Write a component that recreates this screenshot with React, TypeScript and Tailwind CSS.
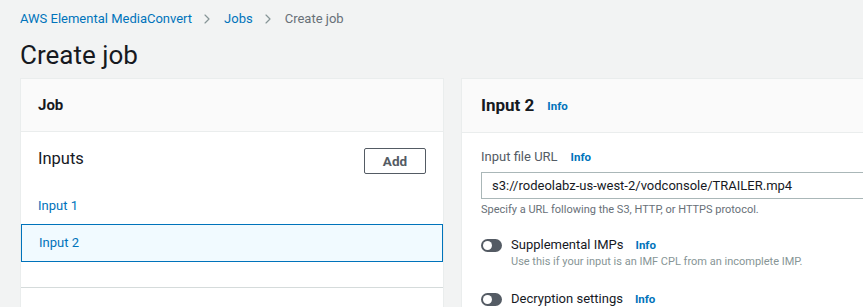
import { ChevronRight } from "lucide-react";

const Info = ({ className = "" }: { className?: string }) => (
  <span className={`text-[11.5px] font-bold text-[#0073bb] ${className}`}>Info</span>
);

const Toggle = () => (
  <span className="flex h-[13px] w-[21px] shrink-0 items-center rounded-full bg-[#545b64] px-[2px]">
    <span className="h-[9px] w-[9px] rounded-full bg-white" />
  </span>
);

const App = () => {
  return (
    <div
      className="h-[307px] w-[863px] overflow-hidden bg-[#f2f3f3] pl-5 text-[#16191f]"
      style={{ fontFamily: 'Roboto, "Open Sans", sans-serif' }}
    >
      <nav className="flex h-[38px] items-center text-[13px]">
        <span className="text-[#0073bb]">AWS Elemental MediaConvert</span>
        <ChevronRight className="ml-[7px] mr-[9px] h-4 w-4 text-[#879596]" strokeWidth={1.75} />
        <span className="text-[#0073bb]">Jobs</span>
        <ChevronRight className="ml-[7px] mr-[9px] h-4 w-4 text-[#879596]" strokeWidth={1.75} />
        <span className="text-[#687078]">Create job</span>
      </nav>
      <h1 className="h-[40px] text-[26px] leading-[34px] font-normal">Create job</h1>

      <div className="flex w-[900px] items-start gap-[17px]">
        {/* left panel */}
        <section className="w-[424px] shrink-0 border border-[#eaeded] bg-white">
          <div className="flex h-[53px] items-center border-b border-[#eaeded] bg-[#fafafa] px-[17px]">
            <h2 className="text-[15px] font-bold">Job</h2>
          </div>
          <div className="pt-[16px]">
            <div className="flex items-start justify-between px-[17px]">
              <span className="text-[16.5px] leading-[22px]">Inputs</span>
              <button className="h-[26px] w-[62px] rounded-[2px] border border-[#545b64] text-[13.5px] font-bold text-[#545b64]">
                Add
              </button>
            </div>
            <div className="mt-[13px] flex h-[37px] items-center px-[17px] text-[13px] text-[#0073bb]">
              Input 1
            </div>
            <div className="flex h-[38px] items-center border border-[#0073bb] bg-[#f1faff] px-[17px] text-[13px] text-[#0073bb]">
              Input 2
            </div>
            <div className="h-[25px]" />
          </div>
          <div className="h-[40px] border-t border-[#d5dbdb]" />
        </section>

        {/* right panel */}
        <section className="w-[440px] shrink-0 border border-[#eaeded] bg-white">
          <div className="flex h-[54px] items-center gap-[13px] border-b border-[#eaeded] bg-[#fafafa] px-[19px]">
            <h2 className="text-[17px] font-bold">Input 2</h2>
            <Info className="mt-[2px]" />
          </div>
          <div className="px-[19px] pt-[14px]">
            <div className="flex items-center gap-[13px] leading-[20px]">
              <span className="text-[13px] text-[#545b64]">Input file URL</span>
              <Info />
            </div>
            <div className="mt-[5px] flex h-[27px] items-center border border-[#aab7b8] pl-[10px] text-[13px]">
              s3://rodeolabz-us-west-2/vodconsole/TRAILER.mp4
            </div>
            <p className="mt-[3px] text-[11px] leading-[16px] text-[#687078]">
              Specify a URL following the S3, HTTP, or HTTPS protocol.
            </p>

            <div className="mt-[18px] flex gap-[9px]">
              <div className="pt-[3px]">
                <Toggle />
              </div>
              <div>
                <div className="flex items-center gap-[12px] leading-[18px]">
                  <span className="text-[13px]">Supplemental IMPs</span>
                  <Info />
                </div>
                <p className="text-[11px] leading-[16px] text-[#879596]">
                  Use this if your input is an IMF CPL from an incomplete IMP.
                </p>
              </div>
            </div>

            <div className="mt-[20px] flex gap-[9px]">
              <div className="pt-[3px]">
                <Toggle />
              </div>
              <div className="flex items-center gap-[12px] leading-[18px]">
                <span className="text-[13px]">Decryption settings</span>
                <Info />
              </div>
            </div>
          </div>
        </section>
      </div>
    </div>
  );
};

export default App;
